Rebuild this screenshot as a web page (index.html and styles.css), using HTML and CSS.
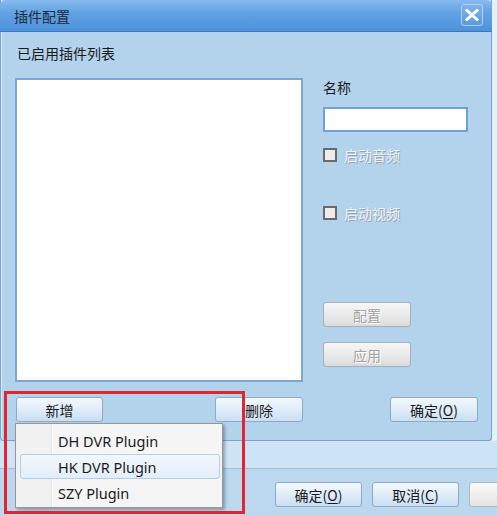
FILE: index.html
```html
<!DOCTYPE html>
<html lang="zh">
<head>
<meta charset="utf-8">
<title>插件配置</title>
<link rel="stylesheet" href="styles.css">
</head>
<body>
<div class="screen">
  <div class="dialog">
    <div class="titlebar">
      <span class="title">插件配置</span>
      <span class="close">
        <svg width="14" height="12" viewBox="0 0 14 12"><path d="M2 1.5 L12 10.5 M12 1.5 L2 10.5" stroke="#fff" stroke-width="3" stroke-linecap="square"/></svg>
      </span>
    </div>
    <div class="content">
      <div class="section-label">已启用插件列表</div>
      <div class="main">
        <div class="listbox"></div>
        <div class="side">
          <div class="field-label">名称</div>
          <div class="textbox"></div>
          <div class="check check-audio"><span class="box"></span><span class="check-text">启动音频</span></div>
          <div class="check check-video"><span class="box"></span><span class="check-text">启动视频</span></div>
          <div class="side-buttons">
            <div class="btn btn-disabled">配置</div>
            <div class="btn btn-disabled">应用</div>
          </div>
        </div>
      </div>
      <div class="actions">
        <div class="btn btn-add">新增</div>
        <div class="btn btn-del">删除</div>
        <div class="btn btn-ok">确定(<u>O</u>)</div>
      </div>
    </div>
  </div>
  <div class="under-band"></div>
  <div class="footer">
    <div class="btn btn-foot">确定(<u>O</u>)</div>
    <div class="btn btn-foot">取消(<u>C</u>)</div>
    <div class="btn btn-foot btn-clip"></div>
  </div>

  <div class="menu">
    <div class="menu-item">DH DVR Plugin</div>
    <div class="menu-item hover">HK DVR Plugin</div>
    <div class="menu-item">SZY Plugin</div>
  </div>
  <div class="highlight"></div>
</div>
</body>
</html>
```

FILE: styles.css
```css
html, body {
  margin: 0;
  padding: 0;
  background: #ffffff;
}
body {
  font-family: "Noto Sans CJK SC", "Noto Sans", sans-serif;
  font-size: 14px;
  color: #1a1a1a;
}
.screen {
  position: relative;
  width: 497px;
  height: 515px;
  overflow: hidden;
  background: linear-gradient(to right, #b7d5ee 0, #b7d5ee 492px, #e4f0fa 492px);
  display: flex;
  flex-direction: column;
}
.dialog {
  width: 492px;
  height: 441px;
  box-sizing: border-box;
  border: 1px solid #7aa3cc;
  border-top: none;
  border-radius: 0 0 4px 4px;
  background: #b3d2ec;
  display: flex;
  flex-direction: column;
  flex: none;
  box-shadow: inset 1px 0 0 #dbeaf7;
}
.titlebar {
  height: 32px;
  box-sizing: border-box;
  margin: 0 -1px;
  border-radius: 6px 6px 0 0;
  background: linear-gradient(to bottom, #86bbee 0%, #62a2e4 40%, #4f92dc 100%);
  border-bottom: 1px solid #3f78b8;
  display: flex;
  align-items: center;
  justify-content: space-between;
  padding: 0 9px 0 14px;
}
.title {
  color: #1c2a3a;
  font-size: 14px;
  line-height: 20px;
}
.close {
  width: 20px;
  height: 20px;
  border: 1px solid #b4d2f0;
  border-radius: 3px;
  background: linear-gradient(to bottom, #7fb2e8, #5a9ade);
  display: flex;
  align-items: center;
  justify-content: center;
  margin-top: -2px;
}
.content {
  flex: 1;
  display: flex;
  flex-direction: column;
  padding: 11px 0 0 14px;
}
.section-label {
  line-height: 20px;
  height: 20px;
  padding-left: 2px;
}
.main {
  display: flex;
  margin-top: 15px;
}
.listbox {
  width: 288px;
  height: 304px;
  box-sizing: border-box;
  background: #ffffff;
  border: 2px solid #7ea7cf;
}
.side {
  margin-left: 20px;
  display: flex;
  flex-direction: column;
}
.field-label {
  line-height: 20px;
  margin-top: -1px;
}
.textbox {
  width: 145px;
  height: 25px;
  box-sizing: border-box;
  margin-top: 10px;
  background: #ffffff;
  border: 2px solid #6f9fd3;
}
.check {
  display: flex;
  align-items: center;
  height: 16px;
}
.check-audio { margin-top: 15px; }
.check-video { margin-top: 42px; }
.box {
  width: 14px;
  height: 14px;
  box-sizing: border-box;
  border: 2px solid #6a6a6a;
  background: #ececec;
  flex: none;
}
.check-text {
  margin-left: 7px;
  color: #eef2f6;
  text-shadow: 1px 1px 0 #98a4b0;
  line-height: 16px;
}
.side-buttons {
  margin-top: 81px;
  display: flex;
  flex-direction: column;
  gap: 15px;
}
.btn {
  width: 88px;
  height: 25px;
  box-sizing: border-box;
  border: 1px solid #8ea9c6;
  border-radius: 3px;
  background: linear-gradient(to bottom, #f3f8fd 0%, #e0edf9 50%, #c9def3 100%);
  display: flex;
  align-items: center;
  justify-content: center;
  line-height: 20px;
  color: #1a1a1a;
  flex: none;
}
.btn u { text-underline-offset: 2px; }
.btn-disabled {
  background: linear-gradient(to bottom, #f6f6f6 0%, #ebebeb 50%, #dadada 100%);
  border-color: #aab0b6;
  color: #a2a2a2;
  text-shadow: 1px 1px 0 #ffffff;
}
.actions {
  display: flex;
  align-items: center;
  margin-top: 15px;
  padding-left: 1px;
}
.btn-add { width: 87px; }
.btn-del { width: 88px; margin-left: 112px; }
.btn-ok { margin-left: 87px; }
.under-band {
  height: 27px;
  flex: none;
  background: #cde4f7;
  border-bottom: 1px solid #9fbfdc;
}
.footer {
  flex: 1;
  background: #bcd8ef;
  display: flex;
  align-items: flex-start;
  padding: 13px 0 0 275px;
  gap: 10px;
}
.btn-foot { width: 87px; }
.btn-clip { width: 60px; background: linear-gradient(to bottom, #fafafa, #e4e4e4); border-color: #b0b8c0; }

.menu {
  position: absolute;
  left: 15px;
  top: 423px;
  width: 208px;
  height: 85px;
  box-sizing: border-box;
  padding: 3px 2px;
  background: linear-gradient(to right, #f1f1f1 0, #f1f1f1 35px, #e2e3e3 35px, #e2e3e3 36px, #ffffff 36px, #ffffff 37px, #f5f5f5 37px);
  border: 1px solid #979797;
  box-shadow: 2px 2px 3px rgba(0,0,0,0.3);
  font-family: "Noto Sans", "Open Sans", sans-serif;
  font-size: 14.5px;
  color: #1a1a1a;
}
.menu-item {
  height: 26px;
  line-height: 26px;
  padding-left: 39px;
  box-sizing: border-box;
  border: 1px solid transparent;
  border-radius: 3px;
}
.menu-item.hover {
  height: 25px;
  line-height: 24px;
  margin: 1px 0 0 2px;
  width: 200px;
  padding-left: 37px;
  border-color: #aecff0;
  background: linear-gradient(to bottom, #f2f7fc, #e3eefa);
}
.highlight {
  position: absolute;
  left: 4px;
  top: 391px;
  width: 241px;
  height: 123px;
  box-sizing: border-box;
  border: 3px solid #e2252f;
}
```
